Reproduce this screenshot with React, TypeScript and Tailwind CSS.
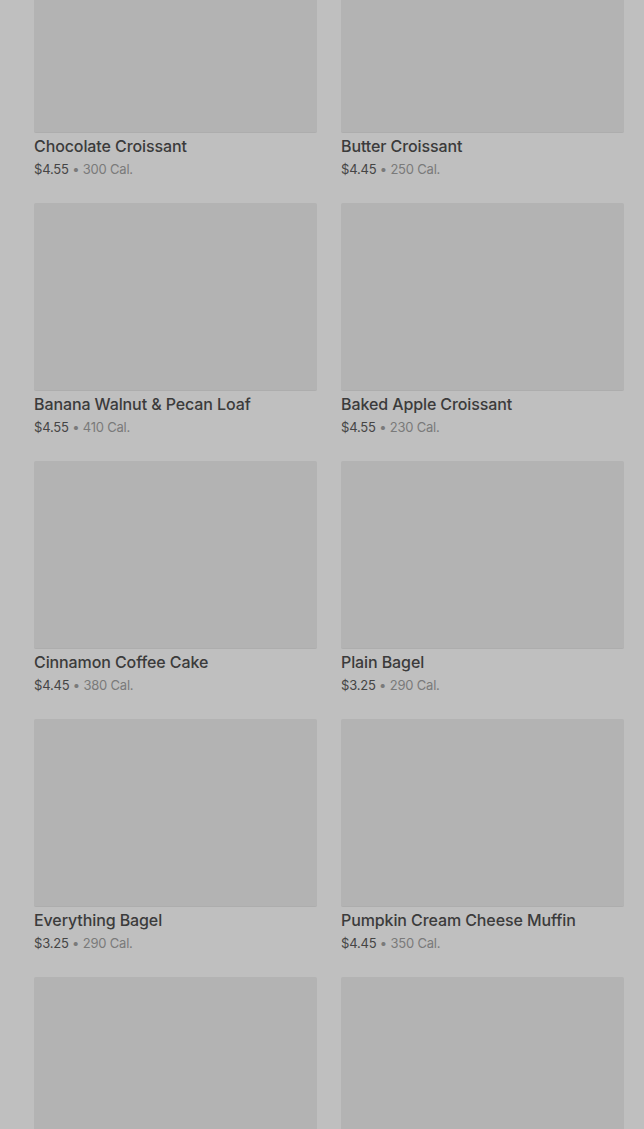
import React from "react";

const items = [
  { name: "Chocolate Croissant", price: "$4.55", cal: "300 Cal." },
  { name: "Butter Croissant", price: "$4.45", cal: "250 Cal." },
  { name: "Banana Walnut & Pecan Loaf", price: "$4.55", cal: "410 Cal." },
  { name: "Baked Apple Croissant", price: "$4.55", cal: "230 Cal." },
  { name: "Cinnamon Coffee Cake", price: "$4.45", cal: "380 Cal." },
  { name: "Plain Bagel", price: "$3.25", cal: "290 Cal." },
  { name: "Everything Bagel", price: "$3.25", cal: "290 Cal." },
  { name: "Pumpkin Cream Cheese Muffin", price: "$4.45", cal: "350 Cal." },
  { name: "", price: "", cal: "" },
  { name: "", price: "", cal: "" },
];

export default function App() {
  return (
    <div
      className="w-[644px] h-[1129px] overflow-hidden bg-[#bfbfbf]"
      style={{ fontFamily: "Inter, 'Liberation Sans', sans-serif" }}
    >
      <div className="grid grid-cols-2 gap-x-[24px] gap-y-[25px] pl-[34px] pr-[20px] mt-[-55px]">
        {items.map((it, i) => (
          <div key={i} className="flex flex-col">
            <div className="h-[188px] rounded-[2px] bg-[#b3b3b3] border-b border-[#adadad]" />
            {it.name && (
              <>
                <div className="mt-[3px] text-[16px] leading-[20px] font-medium text-[#3b3b3b] tracking-[-0.1px]">
                  {it.name}
                </div>
                <div className="mt-[4px] text-[13px] leading-[18px] tracking-[-0.2px]">
                  <span className="text-[#454545]">{it.price}</span>
                  <span className="text-[#7a7a7a]"> • {it.cal}</span>
                </div>
              </>
            )}
          </div>
        ))}
      </div>
    </div>
  );
}
